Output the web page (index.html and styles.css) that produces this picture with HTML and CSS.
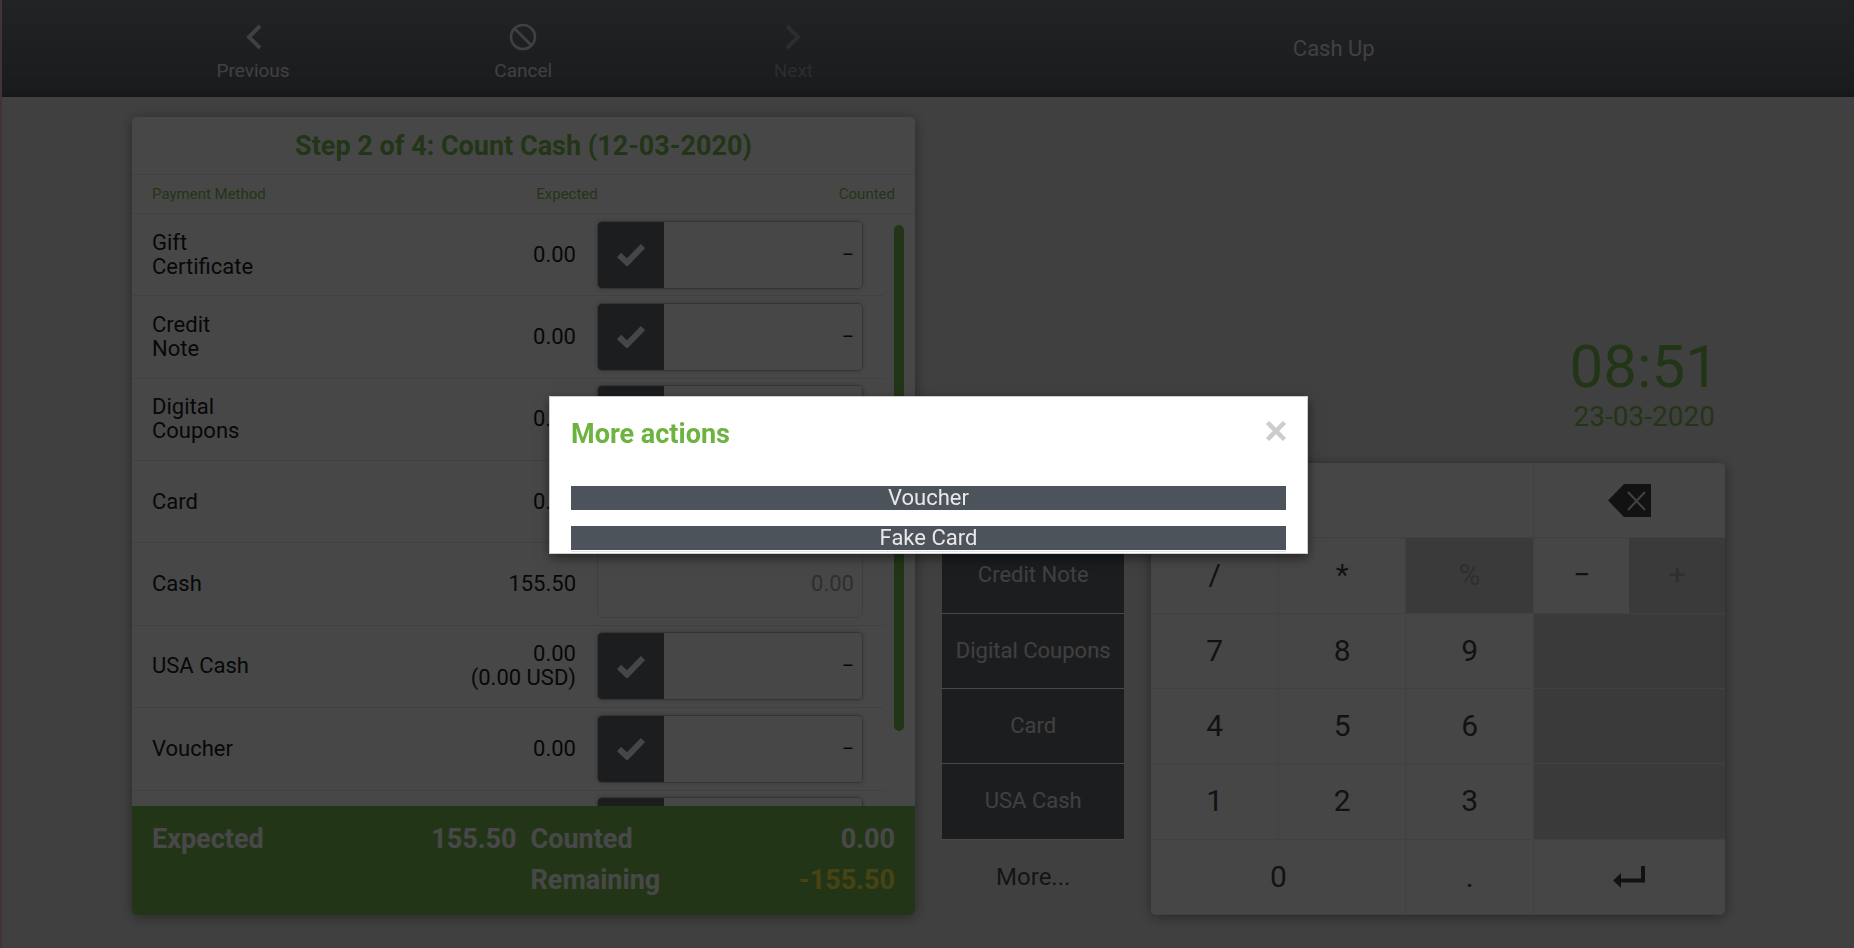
FILE: index.html
```html
<!DOCTYPE html>
<html lang="en">
  <head>
    <meta charset="utf-8">
    <title>Cash Up</title>
    <link rel="stylesheet" href="styles.css">
  </head>
  <body>
    <div class="app">
      <header class="toolbar">
        <nav class="toolbar-left">
          <button class="tool">
            <svg width="26" height="28" viewBox="0 0 26 28"><path d="M20 3 9 14l11 11" fill="none" stroke="currentColor" stroke-width="4"/></svg>
            Previous
          </button>
          <button class="tool">
            <svg width="28" height="28" viewBox="0 0 28 28"><circle cx="14" cy="14" r="12" fill="none" stroke="currentColor" stroke-width="2.6"/><path d="M5.500 5.500l17 17" stroke="currentColor" stroke-width="2.600"/></svg>
            Cancel
          </button>
          <button class="tool" disabled>
            <svg width="26" height="28" viewBox="0 0 26 28"><path d="M7 3l11 11L7 25" fill="none" stroke="currentColor" stroke-width="4"/></svg>
            Next
          </button>
        </nav>
        <div class="toolbar-title">Cash Up</div>
      </header>

      <main class="content">
        <section class="count-card">
          <h1 class="count-title">Step 2 of 4: Count Cash (12-03-2020)</h1>
          <div class="count-head">
            <span>Payment Method</span>
            <span>Expected</span>
            <span>Counted</span>
          </div>
          <div class="count-body">
            <div class="count-scroll">
              <table class="methods">
                <tr>
                  <td class="name"><div class="name-text">Gift Certificate</div></td>
                  <td class="expected">0.00</td>
                  <td class="counted"><div class="field"><button class="check" aria-label="Match"><svg width="28" height="23" viewBox="0 0 28 23"><path d="M2 12l8 7.500L26 3" fill="none" stroke="currentColor" stroke-width="6"/></svg></button><input class="amount" value="−" aria-label="Gift Certificate counted"></div></td>
                </tr>
                <tr>
                  <td class="name"><div class="name-text">Credit Note</div></td>
                  <td class="expected">0.00</td>
                  <td class="counted"><div class="field"><button class="check" aria-label="Match"><svg width="28" height="23" viewBox="0 0 28 23"><path d="M2 12l8 7.500L26 3" fill="none" stroke="currentColor" stroke-width="6"/></svg></button><input class="amount" value="−" aria-label="Credit Note counted"></div></td>
                </tr>
                <tr>
                  <td class="name"><div class="name-text">Digital Coupons</div></td>
                  <td class="expected">0.00</td>
                  <td class="counted"><div class="field"><button class="check" aria-label="Match"><svg width="28" height="23" viewBox="0 0 28 23"><path d="M2 12l8 7.500L26 3" fill="none" stroke="currentColor" stroke-width="6"/></svg></button><input class="amount" value="−" aria-label="Digital Coupons counted"></div></td>
                </tr>
                <tr>
                  <td class="name"><div class="name-text">Card</div></td>
                  <td class="expected">0.00</td>
                  <td class="counted"><div class="field"><button class="check" aria-label="Match"><svg width="28" height="23" viewBox="0 0 28 23"><path d="M2 12l8 7.500L26 3" fill="none" stroke="currentColor" stroke-width="6"/></svg></button><input class="amount" value="−" aria-label="Card counted"></div></td>
                </tr>
                <tr>
                  <td class="name"><div class="name-text">Cash</div></td>
                  <td class="expected">155.50</td>
                  <td class="counted"><div class="field field-plain"><input class="amount" placeholder="0.00" aria-label="Cash counted"></div></td>
                </tr>
                <tr>
                  <td class="name"><div class="name-text">USA Cash</div></td>
                  <td class="expected">0.00<br>(0.00 USD)</td>
                  <td class="counted"><div class="field"><button class="check" aria-label="Match"><svg width="28" height="23" viewBox="0 0 28 23"><path d="M2 12l8 7.500L26 3" fill="none" stroke="currentColor" stroke-width="6"/></svg></button><input class="amount" value="−" aria-label="USA Cash counted"></div></td>
                </tr>
                <tr>
                  <td class="name"><div class="name-text">Voucher</div></td>
                  <td class="expected">0.00</td>
                  <td class="counted"><div class="field"><button class="check" aria-label="Match"><svg width="28" height="23" viewBox="0 0 28 23"><path d="M2 12l8 7.500L26 3" fill="none" stroke="currentColor" stroke-width="6"/></svg></button><input class="amount" value="−" aria-label="Voucher counted"></div></td>
                </tr>
                <tr>
                  <td class="name"></td>
                  <td class="expected"></td>
                  <td class="counted"><div class="field"><button class="check" aria-label="Match"></button><input class="amount" aria-label="Counted"></div></td>
                </tr>
              </table>
            </div>
            <div class="scrollbar"></div>
          </div>
          <div class="totals">
            <span>Expected</span>
            <span class="right">155.50</span>
            <span class="label">Counted</span>
            <span class="right">0.00</span>
            <span class="label label-remaining">Remaining</span>
            <span class="right negative">-155.50</span>
          </div>
        </section>

        <section class="side">
          <div class="clock">
            <div class="time">08:51</div>
            <div class="date">23-03-2020</div>
          </div>
          <div class="controls">
            <div class="actions">
              <button class="action">Gift Certificate</button>
              <button class="action">Credit Note</button>
              <button class="action">Digital Coupons</button>
              <button class="action">Card</button>
              <button class="action">USA Cash</button>
              <button class="more">More...</button>
            </div>
            <div class="keypad">
              <div class="key display"></div>
              <button class="key wide" aria-label="Backspace">
                <svg width="43" height="33" viewBox="0 0 43 33"><path d="M0 16.500 16 0h27v33H16z" fill="#2b2b2b"/><path d="M20 8l17 18M37 8 20 26" stroke="#e8e8e8" stroke-width="2"/></svg>
              </button>
              <button class="key">/</button>
              <button class="key">*</button>
              <button class="key" disabled>%</button>
              <button class="key half">−</button>
              <button class="key half" disabled>+</button>
              <button class="key">7</button>
              <button class="key">8</button>
              <button class="key">9</button>
              <button class="key wide" disabled></button>
              <button class="key">4</button>
              <button class="key">5</button>
              <button class="key">6</button>
              <button class="key wide" disabled></button>
              <button class="key">1</button>
              <button class="key">2</button>
              <button class="key">3</button>
              <button class="key wide" disabled></button>
              <button class="key zero">0</button>
              <button class="key">.</button>
              <button class="key wide" aria-label="Enter">
                <svg width="32" height="24" viewBox="0 0 32 24"><path d="M7 15.500h23V1" fill="none" stroke="#2b2b2b" stroke-width="4"/><path d="M0 15.500 8 8v15z" fill="#2b2b2b"/></svg>
              </button>
            </div>
          </div>
        </section>
      </main>
    </div>

    <div class="overlay">
      <div class="dialog" role="dialog" aria-labelledby="dialog-title">
        <div class="dialog-head">
          <h2 id="dialog-title">More actions</h2>
          <button class="close" aria-label="Close">
            <svg width="20" height="22" viewBox="0 0 20 22"><path d="M1.500 2.500l17 17M18.500 2.500l-17 17" stroke="#ccc" stroke-width="4.500"/></svg>
          </button>
        </div>
        <div class="dialog-body">
          <button class="dialog-action">Voucher</button>
          <button class="dialog-action">Fake Card</button>
        </div>
      </div>
    </div>
  </body>
</html>
```
FILE: styles.css
```css
* {
  box-sizing: border-box;
}

body {
  margin: 0;
  font-family: Roboto, Arial, sans-serif;
  font-size: 22px;
  line-height: 24px;
  color: #000;
  background-color: #e0e0e0;
}

button,
input {
  font: inherit;
  border: none;
  margin: 0;
  padding: 0;
  background: none;
  color: inherit;
}

button {
  cursor: pointer;
}

.app {
  display: flex;
  flex-direction: column;
  height: 100vh;
  min-height: 940px;
  border-left: 2px solid #e0b0b0;
}

/* top bar */
.toolbar {
  display: flex;
  flex: 0 0 97px;
  padding: 0 115px 0 116px;
  color: #e0e0e0;
  background: linear-gradient(#636b74, #4a4f55 90%, #3a3d42);
}

.toolbar-left {
  display: flex;
  flex: 1;
}

.tool {
  flex: 1;
  display: flex;
  flex-direction: column;
  align-items: center;
  gap: 8px;
  padding-top: 23px;
  font-size: 19px;
  line-height: 24px;
}

.tool:disabled {
  color: #8c9299;
}

.toolbar-title {
  flex: 1;
  text-align: center;
  line-height: 97px;
}

.content {
  flex: 1;
  min-height: 0;
  display: grid;
  grid-template-columns: 1fr 1fr;
  gap: 27px;
  padding: 20px 129px 33px 130px;
}

/* count card */
.count-card {
  display: flex;
  flex-direction: column;
  min-height: 0;
  background: #fcfcfc;
  border-radius: 5px;
  box-shadow: 0 2px 14px rgba(0, 0, 0, 0.45);
  overflow: hidden;
}

.count-title {
  flex: 0 0 58px;
  margin: 0;
  padding-top: 2px;
  font-size: 27px;
  line-height: 55px;
  text-align: center;
  color: #6cb33f;
  border-bottom: 1px solid #e4e4e4;
}

.count-head {
  flex: 0 0 39px;
  display: grid;
  grid-template-columns: 3fr 3fr 4fr;
  padding: 0 20px;
  font-size: 15px;
  line-height: 38px;
  color: #6cb33f;
  border-bottom: 1px solid #e4e4e4;
}

.count-head span + span {
  text-align: right;
}

.count-body {
  flex: 1;
  min-height: 0;
  display: flex;
}

.count-scroll {
  flex: 1;
  overflow: hidden;
  margin-right: 10px;
}

.methods {
  width: 100%;
  height: 659px;
  border-collapse: collapse;
  table-layout: fixed;
}

.methods td {
  padding: 0;
  border-bottom: 1px solid #e4e4e4;
}

.methods .name {
  width: 28%;
  padding-left: 20px;
}

.name-text {
  max-width: 102px;
}

.methods .expected {
  text-align: right;
  padding-right: 21px;
}

.methods .counted {
  width: 287px;
  padding-right: 21px;
}

.field {
  display: flex;
  height: 68px;
  border-radius: 5px;
  overflow: hidden;
  border: 1px solid #b4b4b4;
  box-shadow: 0 0 5px rgba(0, 0, 0, 0.25);
}

.field-plain {
  border-color: #dcdcdc;
  box-shadow: none;
}

.check {
  flex: 0 0 66px;
  display: flex;
  align-items: center;
  justify-content: center;
  background: #4d535b;
  color: #f8f8f8;
}

.amount {
  flex: 1;
  min-width: 0;
  padding-right: 8px;
  text-align: right;
}

.amount::placeholder {
  color: #999;
  opacity: 1;
}

.scrollbar {
  width: 10px;
  height: 506px;
  margin: 11px 11px 0 0;
  border-radius: 5px;
  background: #6cb33f;
}

.totals {
  flex: 0 0 109px;
  display: grid;
  grid-template-columns: 1fr 1fr 1fr 1fr;
  align-content: start;
  padding: 13px 20px 0;
  font-size: 27px;
  font-weight: bold;
  line-height: 41px;
  color: #fff;
  background: #6cb33f;
}

.totals .right {
  text-align: right;
}

.totals .label {
  padding-left: 7px;
}

.totals span:nth-child(2) {
  padding-right: 7px;
}

.totals .label-remaining {
  grid-column: 3;
}

.totals .negative {
  color: #f6ee36;
}

/* right side */
.side {
  display: flex;
  flex-direction: column;
}

.clock {
  flex: 1;
  display: grid;
  justify-content: end;
  align-content: end;
  padding: 0 6px 28px 0;
  text-align: center;
  color: #6cb33f;
}

.time {
  font-size: 60px;
  line-height: 64px;
}

.date {
  font-size: 28px;
  line-height: 36px;
}

.controls {
  flex: 0 0 452px;
  display: grid;
  grid-template-columns: 7fr 22fr;
  gap: 27px;
}

.actions {
  display: grid;
  grid-template-rows: repeat(6, 1fr);
}

.action {
  color: #e0e0e0;
  background: #4d535b;
  border-bottom: 1px solid #fff;
}

.more {
  font-size: 24px;
  color: #333;
}

.keypad {
  display: grid;
  grid-template-columns: 4fr 4fr 4fr 3fr 3fr;
  grid-template-rows: repeat(6, 1fr);
  background: #f8f8f8;
  border-radius: 5px;
  box-shadow: 0 2px 14px rgba(0, 0, 0, 0.45);
  overflow: hidden;
}

.key {
  display: flex;
  align-items: center;
  justify-content: center;
  font-size: 30px;
  color: #2b2b2b;
  border-right: 1px solid #e4e4e4;
  border-bottom: 1px solid #e4e4e4;
}

.key:disabled {
  color: #94989e;
  background: #c6c7c7;
}

.display {
  grid-column: span 3;
}

.wide {
  grid-column: span 2;
}

.zero {
  grid-column: span 2;
}

.wide,
.half {
  border-right: none;
}

/* dialog */
.overlay {
  position: fixed;
  inset: 0;
  display: flex;
  align-items: center;
  justify-content: center;
  padding: 2px 0 0 3px;
  background: rgba(11, 11, 11, 0.75);
}

.dialog {
  width: 41%;
  padding: 20px 21px 1px;
  background: #fff;
  border: 1px solid #ccc;
  box-shadow: 0 4px 12px rgba(0, 0, 0, 0.5);
}

.dialog-head {
  display: flex;
  justify-content: space-between;
  align-items: flex-start;
  height: 69px;
}

.dialog-head h2 {
  margin: 0;
  font-size: 27px;
  line-height: 34px;
  color: #6cb33f;
}

.close {
  display: flex;
  padding-top: 3px;
}

.close svg {
  overflow: visible;
}

.dialog-body {
  display: flex;
  flex-direction: column;
  gap: 16px;
  padding-bottom: 1px;
  border-bottom: 1px solid #e4e4e4;
}

.dialog-action {
  height: 24px;
  color: #e8e8e8;
  background: #4d535b;
}
```
